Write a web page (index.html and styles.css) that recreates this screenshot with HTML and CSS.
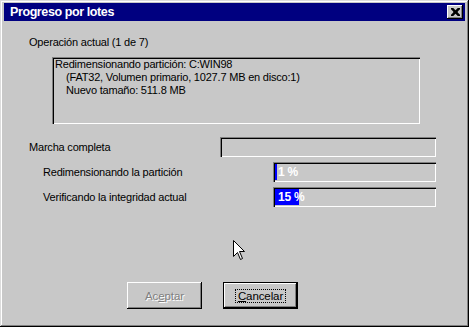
FILE: index.html
```html
<!DOCTYPE html>
<html lang="es">
<head>
  <meta charset="UTF-8" />
  <title>Progreso por lotes</title>
  <link rel="stylesheet" href="styles.css">
</head>
<body>
  <div class="window">
    <div class="titlebar">
      <span class="title">Progreso por lotes</span>
      <button class="close">
        <svg width="8" height="7" viewBox="0 0 8 7"><path d="M0 0h2l2 2 2-2h2v1l-2 2v1l2 2v1h-2l-2-2-2 2h-2v-1l2-2v-1l-2-2z" fill="#000"/></svg>
      </button>
    </div>
    <div class="content">
      <div class="label">Operación actual (1 de 7)</div>
      <div class="info">
        <div>Redimensionando partición: C:WIN98</div>
        <div class="indent">(FAT32, Volumen primario, 1027.7 MB en disco:1)</div>
        <div class="indent">Nuevo tamaño: 511.8 MB</div>
      </div>
      <div class="rows">
        <div class="row">
          <span>Marcha completa</span>
          <div class="bar wide"></div>
        </div>
        <div class="row sub">
          <span>Redimensionando la partición</span>
          <div class="bar"><div class="fill" style="width: 1%"></div><span class="pct">1 %</span></div>
        </div>
        <div class="row sub">
          <span>Verificando la integridad actual</span>
          <div class="bar"><div class="fill" style="width: 15%"></div><span class="pct">15 %</span></div>
        </div>
      </div>
      <div class="buttons">
        <button class="btn disabled">Ac<u>e</u>ptar</button>
        <button class="btn default"><span class="focus"><u>C</u>ancelar</span></button>
      </div>
    </div>
    <svg class="cursor" width="13" height="20" viewBox="0 0 13 20">
      <path d="M0.5 0.5V16.5L4.5 12.5L7.5 19.5L9.5 18.5L6.5 11.5H11.5Z" fill="#fff" stroke="#000" stroke-width="1"/>
    </svg>
  </div>
</body>
</html>
```

FILE: styles.css
```css
* {
  box-sizing: border-box;
  margin: 0;
  padding: 0;
}
body {
  font-family: 'Liberation Sans', Arial, sans-serif;
  font-size: 11px;
  letter-spacing: -0.2px;
  color: #000;
  background: #c8c8c8;
}
.window {
  position: relative;
  width: 469px;
  height: 327px;
  padding: 3px 4px;
  background: #c8c8c8;
  box-shadow: inset -1px -1px #000, inset 1px 1px #dcdcdc, inset -2px -2px #808080, inset 2px 2px #fff;
}
.titlebar {
  height: 18px;
  background: #000080;
  display: flex;
  align-items: center;
  justify-content: space-between;
  padding: 0 2px 0 6px;
}
.title {
  color: #fff;
  font-weight: bold;
  font-size: 12.5px;
  letter-spacing: -0.4px;
}
.close {
  width: 16px;
  height: 14px;
  background: #c8c8c8;
  border: none;
  display: flex;
  align-items: center;
  justify-content: center;
  padding-left: 1px;
  box-shadow: inset -1px -1px #000, inset 1px 1px #fff, inset -2px -2px #808080;
}
.close svg {
  width: 9px;
  height: 8px;
}
.content {
  padding: 15px 0 0 25px;
}
.label {
  line-height: 13px;
}
.info {
  width: 368px;
  height: 67px;
  margin: 8px 0 0 23px;
  padding: 1px 3px;
  line-height: 13px;
  box-shadow: inset 1px 1px #808080, inset 2px 2px #000, inset -1px -1px #fff;
}
.indent {
  padding-left: 11px;
}
.rows {
  margin-top: 13px;
  width: 407px;
  display: flex;
  flex-direction: column;
  gap: 5px;
}
.row {
  height: 20px;
  display: flex;
  align-items: center;
  justify-content: space-between;
}
.row.sub span:first-child {
  padding-left: 14px;
}
.bar {
  position: relative;
  width: 163px;
  height: 20px;
  padding: 2px;
  box-shadow: inset 1px 1px #808080, inset 2px 2px #000, inset -1px -1px #fff;
}
.bar.wide {
  width: 216px;
}
.fill {
  height: 16px;
  min-width: 2px;
  background: #0000ff;
}
.pct {
  position: absolute;
  left: 5px;
  top: 3px;
  color: #fff;
  font-weight: bold;
  font-size: 12px;
  line-height: 14px;
}
.buttons {
  margin: 75px 0 0 98px;
  display: flex;
  gap: 21px;
}
.btn {
  width: 75px;
  height: 27px;
  background: #c8c8c8;
  border: none;
  font-family: inherit;
  font-size: 11.5px;
  letter-spacing: -0.1px;
  display: flex;
  align-items: center;
  justify-content: center;
  box-shadow: inset -1px -1px #000, inset 1px 1px #fff, inset -2px -2px #808080;
}
.btn.disabled {
  color: #808080;
  text-shadow: 1px 1px #fff;
}
.btn.default {
  box-shadow: inset 0 0 0 1px #000, inset -2px -2px #000, inset 2px 2px #fff, inset -3px -3px #808080;
}
.focus {
  padding: 0 2px;
  line-height: 12px;
  outline: 1px dotted #000;
}
.cursor {
  position: absolute;
  left: 233px;
  top: 240px;
}
```
